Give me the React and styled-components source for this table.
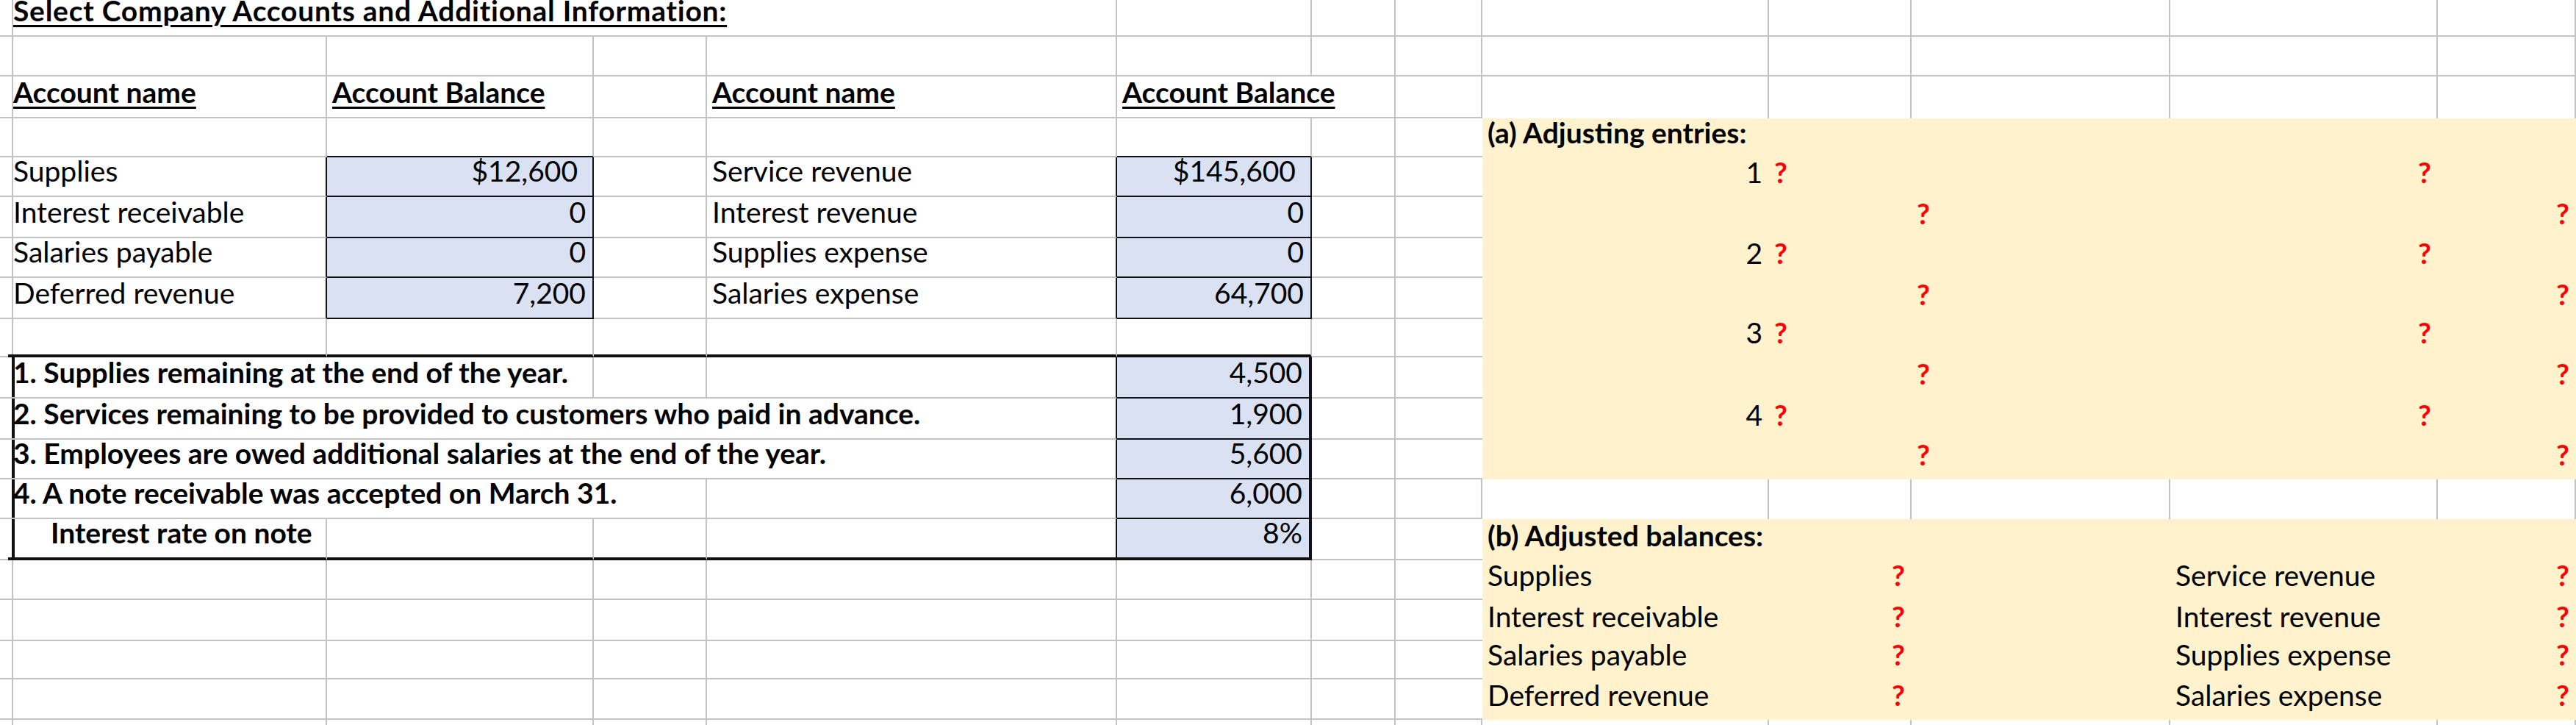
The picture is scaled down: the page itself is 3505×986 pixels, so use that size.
import React from "react";
import styled, { createGlobalStyle } from "styled-components";

const GlobalStyle = createGlobalStyle`
  html, body {
    margin: 0;
    padding: 0;
    background: #ffffff;
    overflow: hidden;
  }
  body {
    font-family: Lato, "Liberation Sans", sans-serif;
  }
`;

// column widths / row heights of the sheet, in px
const COLS = [11, 434, 363, 154, 558, 265, 114, 118, 390, 194, 352, 364, 188];
const ROWS = [50, 54, 57, 53, 54, 56, 54, 56, 52, 56, 56, 54, 54, 56, 54, 56, 52, 55, 7];

const GRID = "#c3c3c3";
const INK = "#111111";
const BLUE = "#d9e1f2";
const YELLOW = "#fff2cc";

const isBlue = (r, c) =>
  ((r >= 4 && r <= 7) && (c === 2 || c === 5)) || (r >= 9 && r <= 13 && c === 5);

const isYellow = (r, c) =>
  c >= 8 && c <= 12 && ((r >= 3 && r <= 11) || (r >= 13 && r <= 17));

// rows framed by the bold box round the additional information
const inBox = (r) => r >= 9 && r <= 13;

function rightEdge(r, c) {
  if (inBox(r) && (c === 0 || c === 5)) return `4px solid ${INK}`;
  if (isBlue(r, c) || isBlue(r, c + 1)) return `2px solid ${INK}`;
  if (isYellow(r, c) || isYellow(r, c + 1)) return "none";
  return `2px solid ${GRID}`;
}

function bottomEdge(r, c) {
  if ((r === 8 || r === 13) && c >= 1 && c <= 5) return `4px solid ${INK}`;
  if (isBlue(r, c) || isBlue(r + 1, c)) return `2px solid ${INK}`;
  if (isYellow(r, c) || isYellow(r + 1, c)) return "none";
  return `2px solid ${GRID}`;
}

const q = (c, align = "left") => ({ c, text: "?", red: true, bold: true, align });
const num = (c, text, cur) => ({ c, text, align: "right", cur });

const DATA = {
  0: [
    {
      c: 1,
      span: 4,
      text: "Select Company Accounts and Additional Information:",
      bold: true,
      underline: true,
      track: 0.75,
    },
  ],
  2: [
    { c: 1, text: "Account name", bold: true, underline: true },
    { c: 2, text: "Account Balance", bold: true, underline: true },
    { c: 4, text: "Account name", bold: true, underline: true },
    { c: 5, span: 2, text: "Account Balance", bold: true, underline: true },
  ],
  3: [{ c: 8, span: 2, text: "(a) Adjusting entries:", bold: true }],
  4: [
    { c: 1, text: "Supplies" },
    num(2, "$12,600", true),
    { c: 4, text: "Service revenue" },
    num(5, "$145,600", true),
    { c: 8, text: "1", align: "right" },
    q(9),
    q(11, "right"),
  ],
  5: [
    { c: 1, text: "Interest receivable" },
    num(2, "0"),
    { c: 4, text: "Interest revenue" },
    num(5, "0"),
    q(10),
    q(12, "right"),
  ],
  6: [
    { c: 1, text: "Salaries payable" },
    num(2, "0"),
    { c: 4, text: "Supplies expense" },
    num(5, "0"),
    { c: 8, text: "2", align: "right" },
    q(9),
    q(11, "right"),
  ],
  7: [
    { c: 1, text: "Deferred revenue" },
    num(2, "7,200"),
    { c: 4, text: "Salaries expense" },
    num(5, "64,700"),
    q(10),
    q(12, "right"),
  ],
  8: [{ c: 8, text: "3", align: "right" }, q(9), q(11, "right")],
  9: [
    { c: 1, span: 2, text: "1. Supplies remaining at the end of the year.", bold: true },
    num(5, "4,500"),
    q(10),
    q(12, "right"),
  ],
  10: [
    { c: 1, span: 4, text: "2. Services remaining to be provided to customers who paid in advance.", bold: true },
    num(5, "1,900"),
    { c: 8, text: "4", align: "right" },
    q(9),
    q(11, "right"),
  ],
  11: [
    { c: 1, span: 4, text: "3. Employees are owed additional salaries at the end of the year.", bold: true },
    num(5, "5,600"),
    q(10),
    q(12, "right"),
  ],
  12: [
    { c: 1, span: 3, text: "4. A note receivable was accepted on March 31.", bold: true },
    num(5, "6,000"),
  ],
  13: [
    { c: 1, text: "Interest rate on note", bold: true, indent: 51 },
    num(5, "8%"),
    { c: 8, span: 2, text: "(b) Adjusted balances:", bold: true },
  ],
  14: [{ c: 8, text: "Supplies" }, q(9, "right"), { c: 11, text: "Service revenue" }, q(12, "right")],
  15: [{ c: 8, text: "Interest receivable" }, q(9, "right"), { c: 11, text: "Interest revenue" }, q(12, "right")],
  16: [{ c: 8, text: "Salaries payable" }, q(9, "right"), { c: 11, text: "Supplies expense" }, q(12, "right")],
  17: [{ c: 8, text: "Deferred revenue" }, q(9, "right"), { c: 11, text: "Salaries expense" }, q(12, "right")],
};

const Sheet = styled.div`
  display: grid;
  width: ${COLS.reduce((a, b) => a + b, 0)}px;
  grid-template-columns: ${COLS.map((w) => `${w}px`).join(" ")};
  grid-template-rows: ${ROWS.map((h) => `${h}px`).join(" ")};
`;

const Cell = styled.div`
  box-sizing: border-box;
  grid-column: span ${(p) => p.$span};
  display: flex;
  align-items: flex-end;
  justify-content: ${(p) => (p.$align === "right" ? "flex-end" : "flex-start")};
  padding: 0 ${(p) => (p.$cur ? 20 : 9)}px 14px ${(p) => 7 + p.$indent}px;
  white-space: nowrap;
  font-size: 39px;
  line-height: 39px;
  font-weight: ${(p) => (p.$bold ? 700 : 400)};
  color: ${(p) => (p.$red ? "#ff0000" : "#000000")};
  background: ${(p) => p.$fill};
  border-right: ${(p) => p.$right};
  border-bottom: ${(p) => p.$bottom};
`;

const Label = styled.span`
  letter-spacing: ${(p) => p.$track}px;
  text-decoration: ${(p) => (p.$underline ? "underline" : "none")};
  text-decoration-thickness: 3px;
  text-underline-offset: 5px;
`;

function buildRow(r) {
  const specs = DATA[r] || [];
  const cells = [];
  let c = 0;
  while (c < COLS.length) {
    const spec = specs.find((s) => s.c === c) || { c };
    const span = spec.span || 1;
    const last = c + span - 1;
    const fill = isBlue(r, c) ? BLUE : isYellow(r, c) ? YELLOW : "transparent";
    cells.push(
      <Cell
        key={`${r}-${c}`}
        $span={span}
        $align={spec.align}
        $bold={spec.bold}
        $red={spec.red}
        $cur={spec.cur}
        $indent={spec.indent || 0}
        $fill={fill}
        $right={rightEdge(r, last)}
        $bottom={bottomEdge(r, c)}
      >
        {spec.text && (
          <Label $underline={spec.underline} $track={spec.track || 0}>
            {spec.text}
          </Label>
        )}
      </Cell>
    );
    c += span;
  }
  return cells;
}

export default function App() {
  return (
    <>
      <GlobalStyle />
      <Sheet>{ROWS.map((_, r) => buildRow(r))}</Sheet>
    </>
  );
}
